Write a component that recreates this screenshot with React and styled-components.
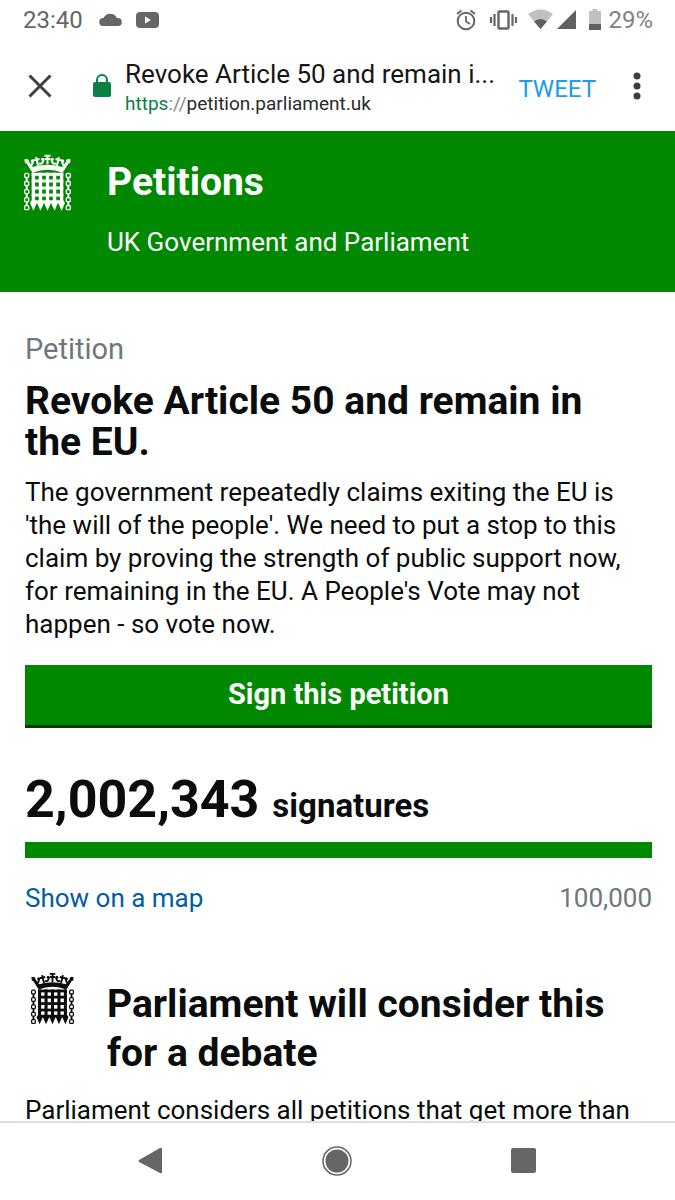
import React from "react";
import styled, { createGlobalStyle } from "styled-components";

const GlobalStyle = createGlobalStyle`
  *, *::before, *::after { box-sizing: border-box; }
  body { margin: 0; background: #fff; color: #0b0c0c; font-family: Roboto, "Liberation Sans", sans-serif; }
  h1, h2, p { margin: 0; }
  button { border: 0; padding: 0; background: none; font-family: inherit; cursor: pointer; }
  a { text-decoration: none; }
  svg { display: block; flex: none; }
`;

const Screen = styled.div`
  display: flex;
  flex-direction: column;
  height: 100vh;
  overflow: hidden;
`;

const StatusBar = styled.div`
  display: flex;
  align-items: center;
  justify-content: space-between;
  flex: none;
  height: 40px;
  padding: 0 22px 0 23px;
  color: #666;
  font-size: 24px;
  line-height: 40px;
`;

const StatusGroup = styled.div`
  display: flex;
  align-items: center;
  gap: ${(p) => p.$gap}px;
`;

const Battery = styled.span`
  color: #828282;
`;

const BrowserBar = styled.header`
  display: flex;
  align-items: center;
  flex: none;
  height: 91px;
  padding: 0 22px 0 24px;
`;

const IconButton = styled.button`
  display: flex;
  align-items: center;
  justify-content: center;
  flex: none;
  width: 32px;
  height: 48px;
`;

const PageInfo = styled.div`
  display: flex;
  align-items: center;
  flex: 1;
  min-width: 0;
  gap: 13px;
  margin-left: 36px;
`;

const PageNames = styled.div`
  flex: 1;
  min-width: 0;
  padding-top: 4px;
`;

const TabTitle = styled.div`
  white-space: nowrap;
  font-size: 26px;
  line-height: 32px;
  color: #161616;
`;

const Address = styled.div`
  font-size: 19px;
  line-height: 28px;
  color: #2b2b2b;
`;

const Scheme = styled.span`
  color: #0b8043;
`;

const Slashes = styled.span`
  color: #8a8a8a;
`;

const TweetButton = styled.button`
  flex: none;
  margin: 6px 25px 0 16px;
  font-size: 24px;
  line-height: 32px;
  color: #1d9bf0;
`;

const Viewport = styled.div`
  flex: 1;
  min-height: 0;
  overflow: hidden;
`;

const Banner = styled.div`
  display: flex;
  align-items: flex-start;
  gap: 36px;
  padding: 23px 24px 33px;
  background: #008800;
  color: #fff;
`;

const BannerText = styled.div`
  padding-top: 8px;
`;

const SiteName = styled.a`
  display: block;
  color: #fff;
  font-size: 39px;
  font-weight: 700;
  line-height: 40px;
`;

const Tagline = styled.p`
  margin-top: 24px;
  font-size: 26px;
  line-height: 33px;
`;

const Content = styled.main`
  padding: 40px 23px 0 25px;
`;

const Kicker = styled.p`
  font-size: 29px;
  line-height: 34px;
  color: #6f777b;
`;

const Title = styled.h1`
  margin-top: 15px;
  padding-right: 24px;
  font-size: 39px;
  font-weight: 700;
  line-height: 41px;
`;

const Body = styled.p`
  margin-top: ${(p) => p.$top}px;
  font-size: 26px;
  line-height: 33px;
`;

const SignButton = styled.button`
  display: block;
  width: 100%;
  margin-top: 24px;
  padding: 13px 0 17px;
  background: #008800;
  box-shadow: inset 0 -3px 0 #003e00;
  color: #fff;
  font-size: 29px;
  font-weight: 700;
  line-height: 33px;
`;

const Count = styled.p`
  margin-top: 40px;
  font-size: 33px;
  font-weight: 700;
  line-height: 64px;
`;

const Number = styled.span`
  font-size: 52px;
`;

const Progress = styled.div`
  height: 16px;
  margin-top: 4px;
  background: #008800;
`;

const CountFooter = styled.div`
  display: flex;
  justify-content: space-between;
  margin-top: 24px;
  font-size: 26px;
  line-height: 33px;
`;

const MapLink = styled.a`
  color: #005ea5;
`;

const Target = styled.span`
  color: #6f777b;
`;

const Debate = styled.section`
  display: flex;
  align-items: flex-start;
  gap: 33px;
  margin-top: 57px;
  padding-left: 6px;
`;

const DebateTitle = styled.h2`
  padding-top: 8px;
  font-size: 39px;
  font-weight: 700;
  line-height: 49px;
`;

const NavBar = styled.nav`
  display: flex;
  align-items: center;
  justify-content: space-around;
  flex: none;
  height: 79px;
  padding: 0 58px 2px 56px;
  border-top: 2px solid #dedede;
`;

const NavButton = styled.button`
  display: flex;
  align-items: center;
  justify-content: center;
  width: 48px;
  height: 48px;
`;

const bars = [28, 49, 70, 91, 112];
const rails = [55, 75, 96, 117, 137];
const links = [0, 1, 2, 3, 4];

function Portcullis({ color, width, height }) {
  return (
    <svg width={width} height={height} viewBox="0 0 140 168" fill={color} aria-hidden="true">
      <path d="M17 40Q70 22 123 40L115 55Q70 37 25 55z" />
      <path d="M0 16 8 13 30 42 22 50zM140 16 132 13 110 42 118 50z" />
      <path
        d="M36 8 42 34M104 8 98 34M70 2V30M61 4H79M62 14H78M3 25 13 16M137 25 127 16M29 18 46 14M111 18 94 14"
        fill="none"
        stroke={color}
        strokeWidth="6"
      />
      <path
        d="M14 32Q26 36 26 21M126 32Q114 36 114 21M44 27Q57 31 58 16M96 27Q83 31 82 16"
        fill="none"
        stroke={color}
        strokeWidth="6"
      />
      <circle cx="25" cy="20" r="5" />
      <circle cx="115" cy="20" r="5" />
      <circle cx="56" cy="15" r="5" />
      <circle cx="84" cy="15" r="5" />
      {bars.map((x) => (
        <path key={x} d={`M${x - 5} 55h10v82l5 8-10 23-10-23 5-8z`} />
      ))}
      {rails.map((y) => (
        <rect key={y} x="23" y={y} width="94" height="9" />
      ))}
      {[8, 132].map((x) =>
        links.map((i) => (
          <g key={`${x}-${i}`}>
            <rect x={x - 6} y={57 + i * 24} width="12" height="12" rx="3" fill="none" stroke={color} strokeWidth="4" />
            {i < 4 && <rect x={x - 3} y={69 + i * 24} width="6" height="12" />}
          </g>
        ))
      )}
    </svg>
  );
}

export default function App() {
  return (
    <Screen>
      <GlobalStyle />
      <StatusBar>
        <StatusGroup $gap={16}>
          <span>23:40</span>
          <StatusGroup $gap={13}>
            <svg width="24" height="14" viewBox="0 0 24 14" fill="#666" aria-hidden="true">
              <path d="M4 13a4 4 0 0 1 .5-8A7.500 7.500 0 0 1 18 5a4 4 0 0 1 1.500 8z" />
            </svg>
            <svg width="23" height="16" viewBox="0 0 23 16" aria-hidden="true">
              <rect width="23" height="16" rx="4" fill="#666" />
              <path d="M9 4.500v7l6-3.500z" fill="#fff" />
            </svg>
          </StatusGroup>
        </StatusGroup>
        <StatusGroup $gap={7}>
          <svg width="146" height="24" viewBox="0 0 146 24" fill="none" stroke="#666" aria-hidden="true">
            <circle cx="11" cy="13" r="8.300" strokeWidth="2" />
            <path d="M11 8v5.500l4 2.500" strokeWidth="1.800" />
            <path d="M2 6 6.500 2.500M20 6 15.500 2.500" strokeWidth="2" />
            <rect x="43.500" y="3.500" width="10" height="17" rx="1" strokeWidth="2.400" />
            <path d="M39.500 6v12M36 9v6M57.500 6v12M61 9v6" strokeWidth="2.200" />
            <path d="M73 6Q85.500-3 98 6L85.500 21z" fill="#c0c0c0" stroke="none" />
            <path d="M79 13.500q6.500-5 13 0L85.500 21z" fill="#606060" stroke="none" />
            <path d="M102 21 121 2v19z" fill="#606060" stroke="none" />
            <path d="M134 3h3.500V1h5v2h3.500v13h-12z" fill="#c0c0c0" stroke="none" />
            <path d="M134 16h12v6h-12z" fill="#606060" stroke="none" />
          </svg>
          <Battery>29%</Battery>
        </StatusGroup>
      </StatusBar>
      <BrowserBar>
        <IconButton type="button" aria-label="Close tab">
          <svg width="24" height="24" viewBox="0 0 24 24" stroke="#3c4043" strokeWidth="3">
            <path d="M1.500 1.500 22.500 22.500M22.500 1.500 1.500 22.500" />
          </svg>
        </IconButton>
        <PageInfo>
          <svg width="20" height="24" viewBox="0 0 20 24" aria-hidden="true">
            <rect x="1" y="8" width="18" height="15" rx="2" fill="#0b8043" />
            <path d="M5 9V6a5 5 0 0 1 10 0v3" fill="none" stroke="#0b8043" strokeWidth="2" />
          </svg>
          <PageNames>
            <TabTitle>Revoke Article 50 and remain i...</TabTitle>
            <Address>
              <Scheme>https</Scheme>
              <Slashes>://</Slashes>petition.parliament.uk
            </Address>
          </PageNames>
        </PageInfo>
        <TweetButton type="button">TWEET</TweetButton>
        <IconButton type="button" aria-label="More options">
          <svg width="8" height="28" viewBox="0 0 8 28" fill="#3c4043">
            <circle cx="4" cy="4" r="3.500" />
            <circle cx="4" cy="14" r="3.500" />
            <circle cx="4" cy="24" r="3.500" />
          </svg>
        </IconButton>
      </BrowserBar>
      <Viewport>
        <Banner>
          <Portcullis color="#fff" width={47} height={57} />
          <BannerText>
            <SiteName href="#home">Petitions</SiteName>
            <Tagline>UK Government and Parliament</Tagline>
          </BannerText>
        </Banner>
        <Content>
          <Kicker>Petition</Kicker>
          <Title>Revoke Article 50 and remain in the EU.</Title>
          <Body $top={13}>
            The government repeatedly claims exiting the EU is 'the will of the people'. We need to put a stop to this claim by
            proving the strength of public support now, for remaining in the EU. A People's Vote may not happen - so vote now.
          </Body>
          <SignButton type="button">Sign this petition</SignButton>
          <Count>
            <Number>2,002,343 </Number>signatures
          </Count>
          <Progress />
          <CountFooter>
            <MapLink href="#map">Show on a map</MapLink>
            <Target>100,000</Target>
          </CountFooter>
          <Debate>
            <Portcullis color="#0b0c0c" width={43} height={53} />
            <DebateTitle>Parliament will consider this for a debate</DebateTitle>
          </Debate>
          <Body $top={16}>Parliament considers all petitions that get more than</Body>
        </Content>
      </Viewport>
      <NavBar>
        <NavButton type="button" aria-label="Back">
          <svg width="24" height="28" viewBox="0 0 24 28" fill="#666">
            <path d="M1 13 22 1q2-1 2 1v23q0 2-2 1L1 15q-1-1 0-2z" />
          </svg>
        </NavButton>
        <NavButton type="button" aria-label="Home">
          <svg width="30" height="30" viewBox="0 0 30 30" fill="#666">
            <circle cx="15" cy="15" r="14" fill="none" stroke="#666" strokeWidth="1.500" />
            <circle cx="15" cy="15" r="11.500" />
          </svg>
        </NavButton>
        <NavButton type="button" aria-label="Recent apps">
          <svg width="25" height="25" viewBox="0 0 25 25" fill="#666">
            <rect width="25" height="25" rx="2" />
          </svg>
        </NavButton>
      </NavBar>
    </Screen>
  );
}
